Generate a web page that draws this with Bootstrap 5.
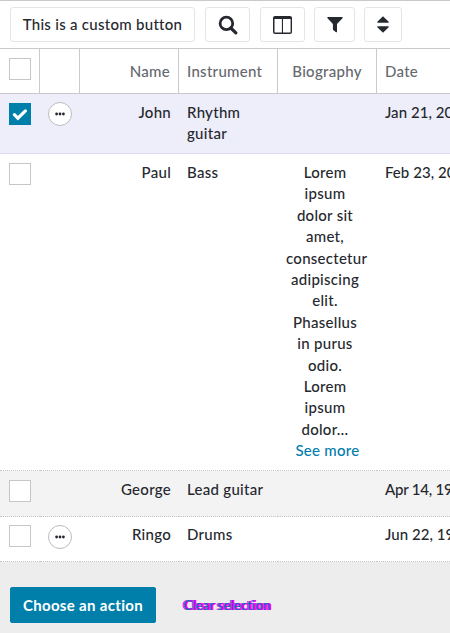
<!DOCTYPE html>
<html lang="en">
<head>
<meta charset="utf-8">
<meta name="viewport" content="width=device-width, initial-scale=1">
<title>Band members</title>
<link href="https://cdn.jsdelivr.net/npm/bootstrap@5.3.0/dist/css/bootstrap.min.css" rel="stylesheet">
<style>
html, body { height: 100%; overflow: hidden; }
body { font: 500 15px/21.4px Lato, "Open Sans", sans-serif; letter-spacing: .28px; color: #25282e; background: #fff; }
.toolbar { height: 49px; padding: 6px 10px 0; border-top: 1px solid #cacace; border-bottom: 1px solid #cacace; }
.tool { --bs-btn-padding-x: 0; --bs-btn-padding-y: 0; --bs-btn-border-radius: 3px; --bs-btn-border-color: #e5e5e7; --bs-btn-bg: #fff; --bs-btn-color: #25282e; height: 35px; display: flex; align-items: center; justify-content: center; font: inherit; letter-spacing: inherit; }
.tool-text { width: 185px; margin-right: 10px; }
.tool-search { width: 45px; margin-right: 10px; }
.tool-columns { width: 45px; margin-right: 9px; }
.tool-filter { width: 41px; margin-right: 9px; }
.tool-sort { width: 38px; }
.members-wrap { overflow: hidden; }
.members { width: 550px; table-layout: fixed; border-collapse: separate; border-spacing: 0; color: inherit; }
.members th, .members td { padding: 8px; vertical-align: top; background: transparent; }
.members th { height: 45px; padding-top: 12px; padding-bottom: 0; font-weight: 500; color: #65686e; border-bottom: 1px solid #cacace; border-right: 1px solid #cacace; }
.members th:first-child { padding-top: 9px; }
.members th.bio-head { padding-left: 0; padding-right: 0; }
.members th:last-child { border-right: 0; }
.members td { border-bottom: 1px dotted #c4c4c6; }
.members .picked td { background: #eeeefa; border-bottom: 1px solid #dcdcf2; }
.members .striped td { background: #f3f3f3; }
.row-john { height: 60px; }
.row-paul { height: 317px; }
.row-george { height: 46px; }
.row-ringo { height: 45px; }
.members td:first-child, .members th:first-child { padding-left: 9px; padding-right: 0; }
.members td:nth-child(2) { padding-left: 8px; padding-right: 0; }
.members td:first-child { padding-top: 9px; }
.members .row-ringo td { padding-top: 7px; }
.members .row-ringo td:first-child, .members .row-ringo td:nth-child(2) { padding-top: 8px; }
.members td:last-child { letter-spacing: .05px; }
.members .striped td:last-child { letter-spacing: -.2px; }
.bio { width: 78px; }
.box { width: 22px; height: 22px; border: 1px solid #c6c6ca; background: #fff; }
.box.on { background: #007fab; border-color: #007fab; }
.more { width: 24px; height: 24px; border: 1px solid #bcbcc0; background: #fff; border-radius: 50%; }
.teal { color: #007daa; }
.footer-bar { height: 71px; padding: 25px 10px 0; background: #ededed; }
.action { --bs-btn-padding-x: 0; --bs-btn-padding-y: 0; --bs-btn-border-radius: 2px; --bs-btn-bg: #007fab; --bs-btn-border-color: #007fab; width: 146px; height: 36px; font: 700 15px/21px Lato, sans-serif; letter-spacing: .33px; }
.clear { font-size: 13px; font-weight: 400; line-height: 18px; letter-spacing: .2px; margin-left: 27px; padding-top: 9px; text-decoration: none; white-space: nowrap; text-shadow: 1px 0 #f0f, -1px 0 #f0f, 2px 0 #f0f, 1px 0 #f0f, 2px 0 #f0f; }
svg { display: block; }
</style>
<script src="https://cdn.jsdelivr.net/npm/bootstrap@5.3.0/dist/js/bootstrap.bundle.min.js" defer></script>
</head>
<body>
<div class="toolbar d-flex">
  <button class="btn tool tool-text" type="button">This is a custom button</button>
  <button class="btn tool tool-search" type="button" aria-label="Search"><svg width="20" height="20" viewBox="0 0 20 20" fill="none" stroke="#25282e"><circle cx="8.4" cy="8.4" r="6.3" stroke-width="2.8"/><path d="M12.8 13l5 4.9" stroke-width="3.2" stroke-linecap="round"/></svg></button>
  <button class="btn tool tool-columns" type="button" aria-label="Columns"><svg width="20" height="18" viewBox="0 0 20 18"><path fill="#25282e" fill-rule="evenodd" d="M2 0h15a2 2 0 0 1 2 2v14a2 2 0 0 1-2 2H2a2 2 0 0 1-2-2V2a2 2 0 0 1 2-2zM1.5 3v13q0 .6.6.6H8.9V3zM10 3v13.6h7q.6 0 .6-.6V3z"/></svg></button>
  <button class="btn tool tool-filter" type="button" aria-label="Filter"><svg width="16" height="17" viewBox="0 0 16 17"><path fill="#25282e" d="M.7 1h14.6q.7.4.2 1.2L10 8.1v7.6q-.2.8-1 .5L6.2 14q-.3-.3-.3-.7V8.1L.5 2.2Q0 1.4.7 1z"/></svg></button>
  <button class="btn tool tool-sort" type="button" aria-label="Sort"><svg width="12" height="17" viewBox="0 0 12 17"><path fill="#25282e" d="M6 .3l5.7 5.5q.2.9-.5.9H.8q-.7 0-.5-.9zM6 16.7l5.7-5.5q.2-.9-.5-.9H.8q-.7 0-.5.9z"/></svg></button>
</div>
<div class="members-wrap">
<table class="members">
  <colgroup><col style="width:40px"><col style="width:40px"><col style="width:99px"><col style="width:99px"><col style="width:99px"><col></colgroup>
  <thead>
    <tr><th><div class="box"></div></th><th></th><th class="text-end">Name</th><th>Instrument</th><th class="bio-head text-center">Biography</th><th>Date</th></tr>
  </thead>
  <tbody>
    <tr class="row-john picked">
      <td><div class="box on d-flex align-items-center justify-content-center"><svg width="16" height="13" viewBox="0 0 16 13"><path d="M2.4 6.7l3.5 3.5 7.5-7.3" fill="none" stroke="#fff" stroke-width="3.2" stroke-linecap="round"/></svg></div></td>
      <td><div class="more d-flex align-items-center justify-content-center"><svg width="10" height="4" viewBox="0 0 10 4" fill="#25282e"><circle cx="1.6" cy="2" r="1.4"/><circle cx="5" cy="2" r="1.4"/><circle cx="8.4" cy="2" r="1.4"/></svg></div></td>
      <td class="text-end">John</td><td>Rhythm guitar</td><td></td><td>Jan 21, 2011</td>
    </tr>
    <tr class="row-paul">
      <td><div class="box"></div></td><td></td>
      <td class="text-end">Paul</td><td>Bass</td>
      <td class="text-center"><div class="bio">Lorem<br>ipsum<br>dolor sit<br>amet,<br>consectetur<br>adipiscing<br>elit.<br>Phasellus<br>in purus<br>odio.<br>Lorem<br>ipsum<br>dolor…</div><span class="teal">See more</span></td>
      <td>Feb 23, 2010</td>
    </tr>
    <tr class="row-george striped">
      <td><div class="box"></div></td><td></td>
      <td class="text-end">George</td><td>Lead guitar</td><td></td><td>Apr 14, 1999</td>
    </tr>
    <tr class="row-ringo">
      <td><div class="box"></div></td>
      <td><div class="more d-flex align-items-center justify-content-center"><svg width="10" height="4" viewBox="0 0 10 4" fill="#25282e"><circle cx="1.6" cy="2" r="1.4"/><circle cx="5" cy="2" r="1.4"/><circle cx="8.4" cy="2" r="1.4"/></svg></div></td>
      <td class="text-end">Ringo</td><td>Drums</td><td></td><td>Jun 22, 1999</td>
    </tr>
  </tbody>
</table>
</div>
<div class="footer-bar d-flex">
  <button class="btn btn-primary action" type="button">Choose an action</button>
  <a class="clear teal align-self-start" href="#">Clear selection</a>
</div>
</body>
</html>
